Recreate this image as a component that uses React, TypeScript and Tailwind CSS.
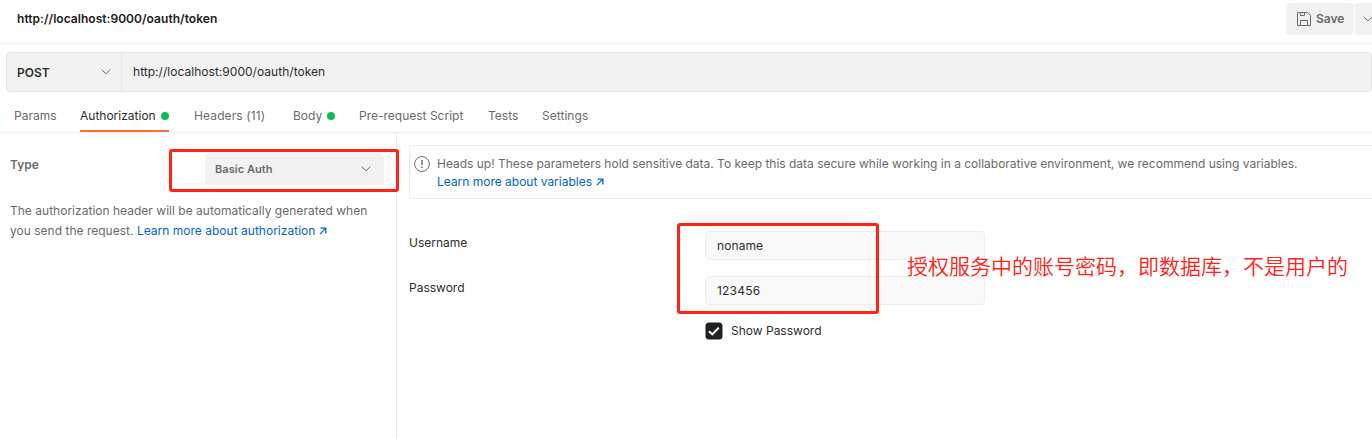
import React from "react";

function Chevron() {
  return (
    <svg width="10" height="6" viewBox="0 0 10 6" fill="none" stroke="#6b6b6b" strokeWidth="1">
      <path d="M0.8 0.7 5 4.9 9.2 0.7" />
    </svg>
  );
}

function LinkArrow() {
  return (
    <svg className="ml-1 inline-block align-[0.5px]" width="8" height="8" viewBox="0 0 8 8" fill="none" stroke="#0265d2" strokeWidth="1.3">
      <path d="M1.5 1.2H6.8V6.5M6.6 1.4 0.9 7.1" />
    </svg>
  );
}

function SaveIcon() {
  return (
    <svg width="14" height="14" viewBox="0 0 14 14" fill="none" stroke="#6b6b6b">
      <path d="M.5.5H10.5L13.5 3.5V13.5H.5ZM3.5.5V3.5H7.5V.5M3.5 13.5V8.5H10.5V13.5" />
    </svg>
  );
}

function Tab({ label, className, dot, active }: { label: string; className: string; dot?: boolean; active?: boolean }) {
  return (
    <div className={`flex h-full shrink-0 items-center justify-between whitespace-nowrap border-b-2 pt-[2px] ${active ? "border-[#ff6c37] text-[#2e2e2e]" : "border-transparent text-[#6b6b6b]"} ${className}`}>
      <span>{label}</span>
      {dot && <span className="size-2 rounded-full bg-[#0cbb52]" />}
    </div>
  );
}

function Field({ label, value, className }: { label: string; value: string; className: string }) {
  return (
    <div className="flex h-[29px] items-center">
      <div className="relative top-[-3px] w-[296px] text-[#2e2e2e]">{label}</div>
      <div className={`flex h-[29px] w-[280px] items-center rounded-[4px] border border-[#ededed] bg-[#f9f9f9] px-[11px] text-[#2e2e2e] ${className}`}>{value}</div>
    </div>
  );
}

export default function App() {
  return (
    <div className="relative flex h-[439px] w-[1372px] flex-col overflow-hidden bg-white font-['Inter',sans-serif] text-[12px] leading-[18px] text-[#6b6b6b]">
      <header className="flex h-11 shrink-0 items-start justify-between border-b border-[#ededed] pl-[17px]">
        <div className="mt-[10px] font-semibold tracking-[0.04px] text-[#212121]">http://localhost:9000/oauth/token</div>
        <div className="mt-[3px] flex h-8 gap-px">
          <button className="flex w-[68px] items-center gap-[5px] rounded-[4px] bg-[#f2f2f2] pl-[11px] font-semibold">
            <SaveIcon />
            <span>Save</span>
          </button>
          <button className="flex w-[17px] items-center overflow-hidden rounded-l-[2px] bg-[#f2f2f2] pl-2">
            <span className="shrink-0"><Chevron /></span>
          </button>
        </div>
      </header>

      <div className="mt-2 ml-[6px] flex h-10 shrink-0 rounded-[4px] border border-[#e6e6e6] bg-[#f2f2f2] text-[#2e2e2e]">
        <div className="flex w-[115px] items-center justify-between border-r border-[#e6e6e6] pr-[10px] pl-[10px] font-semibold">
          <span className="pt-px">POST</span>
          <Chevron />
        </div>
        <div className="flex items-center pl-[11px] tracking-[0.03px]">http://localhost:9000/oauth/token</div>
      </div>

      <nav className="flex h-[41px] shrink-0 items-end border-b border-[#ededed] pl-[14px]">
        <div className="flex h-8">
          <Tab label="Params" className="mr-6 w-[42px]" />
          <Tab label="Authorization" className="mr-[25px] w-[89px]" dot active />
          <Tab label="Headers (11)" className="mr-[27px] w-[72px] tracking-[0.12px]" />
          <Tab label="Body" className="mr-6 w-[42px]" dot />
          <Tab label="Pre-request Script" className="mr-6 w-[105px]" />
          <Tab label="Tests" className="mr-6 w-[30px]" />
          <Tab label="Settings" className="w-[47px] tracking-[0.04px]" />
        </div>
      </nav>

      <main className="flex min-h-0 flex-1">
        <aside className="w-[397px] shrink-0 border-r border-[#ededed] pl-[10px]">
          <div className="mt-5 flex h-8 items-start justify-between pr-3">
            <span className="mt-[3px] font-semibold">Type</span>
            <div className="flex h-8 w-[179px] items-center justify-between rounded-[4px] bg-[#f2f2f2] pr-[13px] pl-[10px] text-[11px] font-semibold">
              <span className="tracking-[0.04px]">Basic Auth</span>
              <Chevron />
            </div>
          </div>
          <p className="mt-4 whitespace-nowrap leading-5 tracking-[0.015px]">
            The authorization header will be automatically generated when
            <br />
            you send the request. <a className="text-[#0265d2]">Learn more about authorization<LinkArrow /></a>
          </p>
        </aside>

        <section className="flex-1 pl-3">
          <div className="mt-3 flex h-[54px] w-[980px] rounded-[4px] border border-[#ededed] pt-[9px] pl-[4px]">
            <svg className="mt-px shrink-0" width="16" height="16" viewBox="0 0 16 16" fill="none" stroke="#6b6b6b">
              <circle cx="8" cy="8" r="7.4" />
              <path d="M8 4V9M8 10.5V12" strokeWidth="1.4" />
            </svg>
            <p className="ml-[7px] whitespace-nowrap tracking-[-0.01px]">
              Heads up! These parameters hold sensitive data. To keep this data secure while working in a collaborative environment, we recommend using variables.
              <br />
              <a className="text-[#0265d2]">Learn more about variables<LinkArrow /></a>
            </p>
          </div>
          <div className="mt-8 flex flex-col gap-4">
            <Field label="Username" value="noname" className="tracking-[0.1px]" />
            <Field label="Password" value="123456" className="tracking-[0.2px]" />
          </div>
          <label className="mt-4 ml-[296px] flex items-center gap-2 text-[#2e2e2e]">
            <svg width="18" height="18" viewBox="0 0 18 18" fill="none">
              <rect x="0.5" y="0.5" width="17" height="17" rx="3.5" fill="#212121" />
              <path d="M4 9.2 7.3 12.4 13.8 5.6" stroke="#fff" strokeWidth="2" />
            </svg>
            <span className="pt-px">Show Password</span>
          </label>
        </section>
      </main>

      <div className="absolute top-[149px] left-[169px] h-[43px] w-[230px] rounded-[3px] border-3 border-[#ff2215]" />
      <div className="absolute top-[223px] left-[677px] h-[91px] w-[202px] rounded-[3px] border-3 border-[#ff2215]" />
      <div className="absolute top-[250px] left-[907px] font-['Noto_Sans_CJK_SC',sans-serif] text-[21px] leading-[30px] font-[350] whitespace-nowrap text-[#ff2215]">
        授权服务中的账号密码，即数据库，不是用户的
      </div>
    </div>
  );
}
